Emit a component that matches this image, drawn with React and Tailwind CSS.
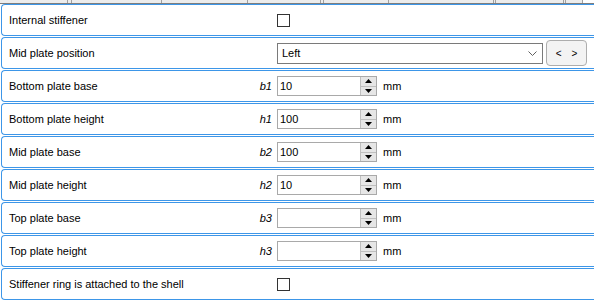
import React from "react";

const font = { fontFamily: '"Liberation Sans", Arial, sans-serif' };

const headerCells = [68, 4, 90, 86, 73, 3, 65, 105, 2, 68, 2, 17];

const rows = [
  { label: "Internal stiffener", kind: "check" },
  { label: "Mid plate position", kind: "combo", value: "Left" },
  { label: "Bottom plate base", sym: "b1", kind: "num", value: "10" },
  { label: "Bottom plate height", sym: "h1", kind: "num", value: "100" },
  { label: "Mid plate base", sym: "b2", kind: "num", value: "100" },
  { label: "Mid plate height", sym: "h2", kind: "num", value: "10" },
  { label: "Top plate base", sym: "b3", kind: "num", value: "" },
  { label: "Top plate height", sym: "h3", kind: "num", value: "" },
  { label: "Stiffener ring is attached to the shell", kind: "check" },
];

function Checkbox() {
  return <div className="h-[13px] w-[13px] border border-[#333333] bg-white" />;
}

function Combo({ value }) {
  return (
    <div className="flex items-center gap-[3px]">
      <div className="flex h-[21px] w-[266px] items-center justify-between border border-[#7a7a7a] bg-white pl-[4px] pr-[5px]">
        <span>{value}</span>
        <svg width="9" height="6" viewBox="0 0 9 6" className="mt-[1px]">
          <path d="M0.5 0.5 L4.5 4.5 L8.5 0.5" fill="none" stroke="#606060" strokeWidth="1" />
        </svg>
      </div>
      <div className="flex h-[26px] w-[41px] items-center justify-center gap-[10px] rounded-[4px] border border-[#adadad] bg-[#f3f3f3] text-[10px]">
        <span>&lt;</span>
        <span>&gt;</span>
      </div>
    </div>
  );
}

function NumInput({ value }) {
  return (
    <div className="flex items-center">
      <div className="flex h-[20px] w-[100px] items-center border border-[#a9a9a9] bg-white">
        <span className="flex-1 pl-[2px] leading-none">{value}</span>
        <div className="flex h-full w-[16px] flex-col border-l border-[#bfbfbf] bg-[#e6e6e6]">
          <div className="flex flex-1 items-center justify-center border-b border-[#bfbfbf]">
            <svg width="7" height="4" viewBox="0 0 7 4">
              <path d="M3.5 0 L7 4 L0 4 Z" fill="#000" />
            </svg>
          </div>
          <div className="flex flex-1 items-center justify-center">
            <svg width="7" height="4" viewBox="0 0 7 4">
              <path d="M0 0 L7 0 L3.5 4 Z" fill="#000" />
            </svg>
          </div>
        </div>
      </div>
      <span className="ml-[6px]">mm</span>
    </div>
  );
}

function Row({ row }) {
  return (
    <div className="ml-[1px] flex h-[32px] w-[620px] shrink-0 items-center rounded-l-[4px] border border-r-0 border-[#3d96e8] bg-white">
      <div className="flex w-[275px] items-center justify-between pl-[7px] pr-[5px]">
        <span>{row.label}</span>
        {row.sym && <span className="italic">{row.sym}</span>}
      </div>
      {row.kind === "check" && <Checkbox />}
      {row.kind === "combo" && <Combo value={row.value} />}
      {row.kind === "num" && <NumInput value={row.value} />}
    </div>
  );
}

export default function App() {
  return (
    <div className="h-[305px] w-[594px] overflow-hidden bg-white text-[11px] text-black" style={font}>
      <div className="flex h-[4px] border-b border-[#7d7d7d]">
        {headerCells.map((w, i) => (
          <div
            key={i}
            className="h-full shrink-0 border-r border-[#a0a0a0] bg-[#ececec]"
            style={{ width: w }}
          />
        ))}
      </div>
      <div className="flex flex-col gap-[1px]">
        {rows.map((row, i) => (
          <Row key={i} row={row} />
        ))}
      </div>
    </div>
  );
}
